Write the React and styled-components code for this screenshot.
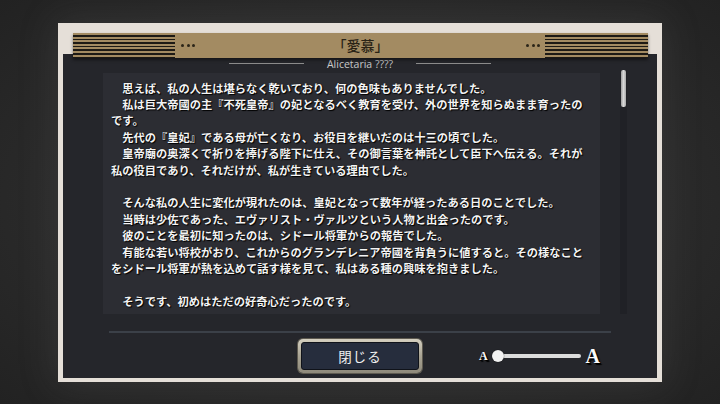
import React from "react";
import styled, { createGlobalStyle } from "styled-components";

const Global = createGlobalStyle`
  html, body { margin: 0; padding: 0; }
  body {
    width: 720px; height: 404px; overflow: hidden;
    background: radial-gradient(ellipse at 50% 50%, #303030 0%, #2a2a2a 60%, #222222 100%);
    font-family: "Noto Sans CJK JP", "Noto Sans", sans-serif;
  }
  #root { width: 720px; height: 404px; }
`;

const Stage = styled.div`
  width: 720px;
  height: 404px;
  display: flex;
  align-items: center;
  justify-content: center;
`;

const Frame = styled.div`
  width: 604px;
  height: 359px;
  box-sizing: border-box;
  background: #e5dfd8;
  padding: 10px 0 4px;
  display: flex;
  flex-direction: column;
  box-shadow: 0 0 34px 4px rgba(110, 110, 110, 0.2);
`;

const Header = styled.div`
  position: relative;
  z-index: 2;
  height: 25px;
  margin: 0 14px 0 15px;
  background: #a38b62;
  display: flex;
  align-items: center;
  box-shadow: 0 2px 3px rgba(0, 0, 0, 0.45);
`;

const Stripes = styled.div`
  width: ${(p) => p.$w}px;
  height: 100%;
  flex: none;
  background: repeating-linear-gradient(
    to bottom,
    #a38b62 0px,
    #a38b62 2px,
    #1d1a15 2px,
    #1d1a15 3.6px
  );
`;

const Dots = styled.div`
  display: flex;
  gap: 2.5px;
  margin: ${(p) => p.$m};
  span {
    width: 3px;
    height: 3px;
    border-radius: 50%;
    background: #2a2418;
  }
`;

const Title = styled.div`
  flex: 1;
  text-align: center;
  font-family: "Noto Sans CJK JP", serif;
  font-size: 14px;
  font-weight: 500;
  color: #2a2316;
  line-height: 25px;
`;

const Panel = styled.div`
  flex: 1;
  margin: -4px 5px 0;
  background: #25262b;
  display: flex;
  flex-direction: column;
  padding: 4px 0 5px;
  box-sizing: border-box;
`;

const SubRow = styled.div`
  height: 12px;
  margin-bottom: 3px;
  display: flex;
  align-items: center;
  justify-content: center;
  gap: 23px;
`;

const SubLine = styled.div`
  width: 75px;
  height: 1.5px;
  background: #8c8c8c;
`;

const SubText = styled.div`
  font-family: "Open Sans", "Noto Sans", sans-serif;
  font-size: 10.5px;
  color: #c9c9c9;
  line-height: 12px;
`;

const Body = styled.div`
  display: flex;
  padding-left: 40px;
  height: 241px;
`;

const TextBox = styled.div`
  width: 497px;
  height: 241px;
  box-sizing: border-box;
  background: #2c2d33;
  padding: 7px 11px 0 8px;
  overflow: hidden;
`;

const Para = styled.p`
  margin: 0;
  min-height: ${(p) => (p.$blank ? "16.4px" : "0")};
  font-family: "Noto Sans CJK JP", sans-serif;
  font-weight: 700;
  font-size: 11.25px;
  line-height: 16.4px;
  color: #f4f4f4;
  text-shadow: 1px 1px 1px #000, 0 0 1px #000;
  line-break: strict;
`;

const ScrollTrack = styled.div`
  width: 7px;
  height: 244px;
  margin: -3px 0 0 20px;
  background: #202126;
  display: flex;
  justify-content: center;
`;

const Thumb = styled.div`
  width: 5px;
  height: 37px;
  border-radius: 2px;
  background: linear-gradient(to right, #9e9e9e, #d8d8d8 50%, #a8a8a8);
`;

const Separator = styled.div`
  height: 2px;
  margin: 17px 46px 0;
  background: #3b4048;
`;

const Footer = styled.div`
  margin-top: 6px;
  height: 34px;
  display: grid;
  grid-template-columns: 1fr auto 1fr;
  align-items: center;
`;

const CloseButton = styled.button`
  grid-column: 2;
  width: 124px;
  height: 34px;
  padding: 3px;
  border: none;
  border-radius: 5px;
  background: linear-gradient(to bottom, #d4cfc0, #a9a493 50%, #8e897b);
  box-shadow: 0 0 0 1px #5e5a50;
  cursor: pointer;
  display: flex;
`;

const ButtonInner = styled.span`
  flex: 1;
  border-radius: 3px;
  background: #262d3d;
  border: 1px solid #10131a;
  display: flex;
  align-items: center;
  justify-content: center;
  font-family: "Noto Sans CJK JP", sans-serif;
  font-size: 13.5px;
  color: #f1f1f1;
  letter-spacing: 1px;
`;

const SliderGroup = styled.div`
  grid-column: 3;
  justify-self: end;
  margin-right: 57px;
  display: flex;
  align-items: center;
`;

const Glyph = styled.span`
  font-family: "Liberation Serif", "DejaVu Serif", serif;
  font-weight: 700;
  font-size: ${(p) => p.$size}px;
  color: #fafafa;
  text-shadow: 1px 1px 0 #000, 2px 2px 1px #000;
  line-height: 1;
`;

const Track = styled.div`
  position: relative;
  width: 84px;
  height: 4px;
  margin: 0 5px 0 9px;
  border-radius: 2px;
  background: #dcdcdc;
`;

const Knob = styled.div`
  position: absolute;
  left: -5px;
  top: 50%;
  width: 12px;
  height: 12px;
  margin-top: -6px;
  border-radius: 50%;
  background: #f2f2f2;
  box-shadow: 0 0 1px #000;
`;

const paragraphs = [
  "　思えば、私の人生は堪らなく乾いており、何の色味もありませんでした。",
  "　私は巨大帝國の主『不死皇帝』の妃となるべく教育を受け、外の世界を知らぬまま育ったのです。",
  "　先代の『皇妃』である母が亡くなり、お役目を継いだのは十三の頃でした。",
  "　皇帝廟の奥深くで祈りを捧げる陛下に仕え、その御言葉を神託として臣下へ伝える。それが私の役目であり、それだけが、私が生きている理由でした。",
  "",
  "　そんな私の人生に変化が現れたのは、皇妃となって数年が経ったある日のことでした。",
  "　当時は少佐であった、エヴァリスト・ヴァルツという人物と出会ったのです。",
  "　彼のことを最初に知ったのは、シドール将軍からの報告でした。",
  "　有能な若い将校がおり、これからのグランデレニア帝國を背負うに値すると。その様なことをシドール将軍が熱を込めて話す様を見て、私はある種の興味を抱きました。",
  "",
  "　そうです、初めはただの好奇心だったのです。",
];

export default function App() {
  return (
    <>
      <Global />
      <Stage>
        <Frame>
          <Header>
            <Stripes $w={102} />
            <Dots $m="0 0 0 6px">
              <span />
              <span />
              <span />
            </Dots>
            <Title>「愛慕」</Title>
            <Dots $m="0 5px 0 0">
              <span />
              <span />
              <span />
            </Dots>
            <Stripes $w={103} />
          </Header>
          <Panel>
            <SubRow>
              <SubLine />
              <SubText>Alicetaria ????</SubText>
              <SubLine />
            </SubRow>
            <Body>
              <TextBox>
                {paragraphs.map((t, i) => (
                  <Para key={i} $blank={t === ""}>
                    {t}
                  </Para>
                ))}
              </TextBox>
              <ScrollTrack>
                <Thumb />
              </ScrollTrack>
            </Body>
            <Separator />
            <Footer>
              <CloseButton>
                <ButtonInner>閉じる</ButtonInner>
              </CloseButton>
              <SliderGroup>
                <Glyph $size={12}>A</Glyph>
                <Track>
                  <Knob />
                </Track>
                <Glyph $size={20}>A</Glyph>
              </SliderGroup>
            </Footer>
          </Panel>
        </Frame>
      </Stage>
    </>
  );
}
